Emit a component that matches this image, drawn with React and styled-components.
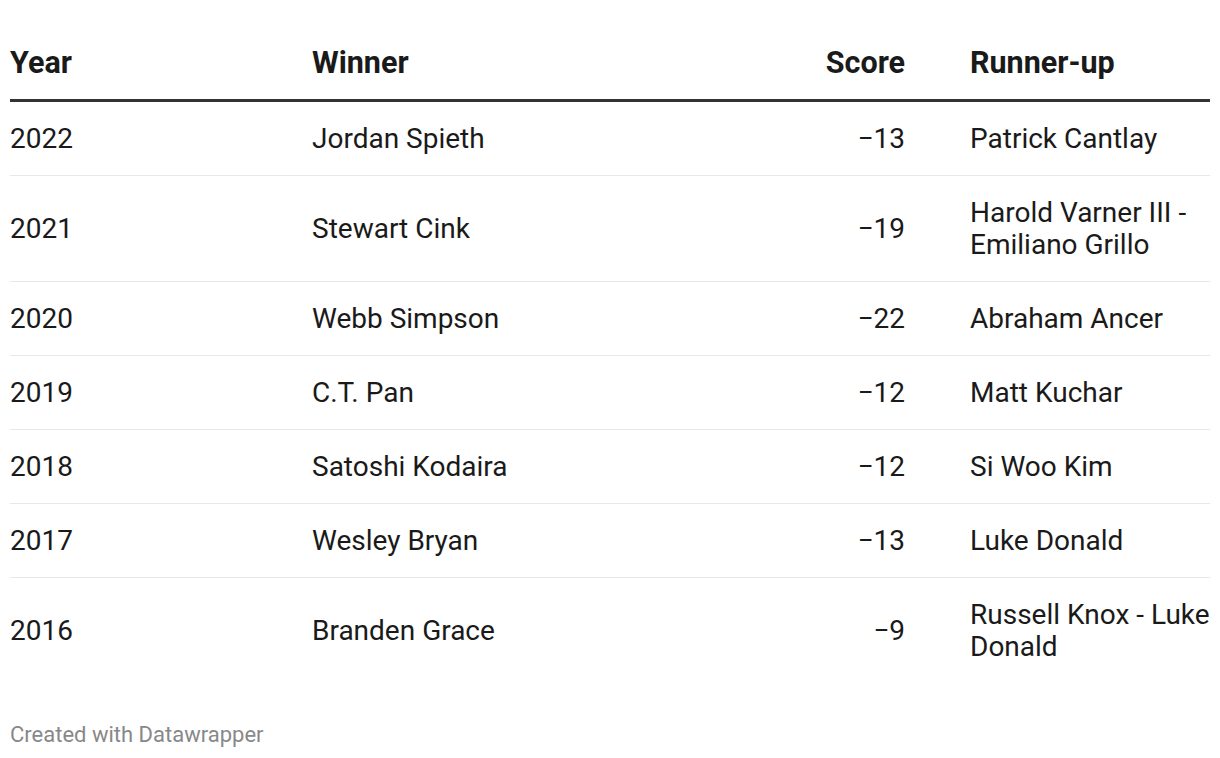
import React from "react";
import styled, { createGlobalStyle } from "styled-components";

const Global = createGlobalStyle`
  html, body { margin: 0; padding: 0; background: #fff; }
  body { font-family: Roboto, "Liberation Sans", Arial, sans-serif; -webkit-font-smoothing: antialiased; }
`;

const Page = styled.div`
  padding: 47px 10px 0 10px;
  width: 1200px;
`;

const Table = styled.div`
  display: flex;
  flex-direction: column;
`;

const Row = styled.div`
  display: grid;
  grid-template-columns: 302px 480px 113px 305px;
  align-items: center;
  padding: ${(p) => (p.$head ? "0 0 20px" : "21px 0 20px")};
  border-bottom: ${(p) =>
    p.$head ? "3px solid #333" : p.$last ? "1px solid transparent" : "1px solid #e8e8e8"};
`;

const Cell = styled.div`
  font-size: ${(p) => (p.$head ? "30.5px" : "28px")};
  font-weight: ${(p) => (p.$head ? 700 : 400)};
  line-height: 32px;
  color: #1a1a1a;
  text-align: ${(p) => (p.$right ? "right" : "left")};
  padding-left: ${(p) => (p.$indent ? "65px" : "0")};
`;

const Footer = styled.div`
  margin-top: 39px;
  font-size: 22px;
  line-height: 24px;
  color: #888;
`;

const data = [
  ["2022", "Jordan Spieth", "−13", "Patrick Cantlay"],
  ["2021", "Stewart Cink", "−19", "Harold Varner III - Emiliano Grillo"],
  ["2020", "Webb Simpson", "−22", "Abraham Ancer"],
  ["2019", "C.T. Pan", "−12", "Matt Kuchar"],
  ["2018", "Satoshi Kodaira", "−12", "Si Woo Kim"],
  ["2017", "Wesley Bryan", "−13", "Luke Donald"],
  ["2016", "Branden Grace", "−9", "Russell Knox - Luke Donald"],
];

export default function App() {
  return (
    <Page>
      <Global />
      <Table>
        <Row $head>
          <Cell $head>Year</Cell>
          <Cell $head>Winner</Cell>
          <Cell $head $right>Score</Cell>
          <Cell $head $indent>Runner-up</Cell>
        </Row>
        {data.map((r, i) => (
          <Row key={r[0]} $last={i === data.length - 1}>
            <Cell>{r[0]}</Cell>
            <Cell>{r[1]}</Cell>
            <Cell $right>{r[2]}</Cell>
            <Cell $indent>{r[3]}</Cell>
          </Row>
        ))}
      </Table>
      <Footer>Created with Datawrapper</Footer>
    </Page>
  );
}
